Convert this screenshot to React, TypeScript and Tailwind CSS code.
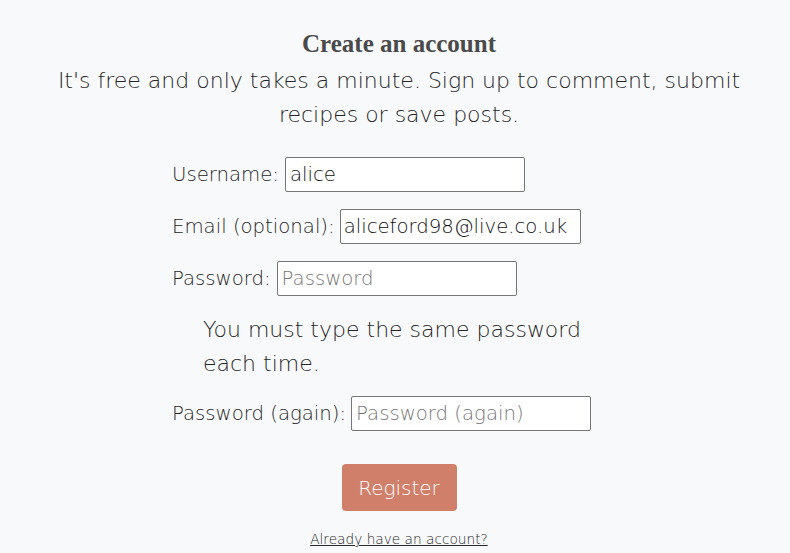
export default function App() {
  return (
    <div className="min-h-[553px] bg-[#f8f9fa] pl-[8px] text-[#262626] font-['DejaVu_Sans',sans-serif] font-extralight">
      <div className="pt-[30px] text-center">
        <h1 className="font-['Liberation_Serif',serif] font-bold text-[25px] leading-[28px] text-[#4a4a4a]">
          Create an account
        </h1>
        <p className="mx-auto mt-[6px] w-[700px] text-[22px] leading-[34px]">
          It's free and only takes a minute. Sign up to comment, submit recipes or save posts.
        </p>
      </div>

      <form className="mx-auto mt-[25px] w-[454px] text-[19.7px]">
        <div className="flex h-[35px] items-center gap-[6px]">
          <label>Username:</label>
          <input
            className="h-[35px] w-[240px] rounded-[2px] border border-[#767676] bg-white px-[4px] text-[#111] outline-none"
            defaultValue="alice"
          />
        </div>
        <div className="mt-[17px] flex h-[35px] items-center gap-[5px]">
          <label>Email (optional):</label>
          <input
            className="h-[35px] w-[241px] rounded-[2px] border border-[#767676] bg-white pl-[3px] pr-[4px] text-[#111] outline-none"
            defaultValue="aliceford98@live.co.uk"
          />
        </div>
        <div className="mt-[17px] flex h-[35px] items-center gap-[6px]">
          <label>Password:</label>
          <input
            type="password"
            className="h-[35px] w-[240px] rounded-[2px] border border-[#767676] bg-white px-[4px] text-[#111] outline-none placeholder:text-[#777]"
            placeholder="Password"
          />
        </div>
        <ul className="mt-[17px] w-[440px] pl-[31px] text-[22px] leading-[34px]">
          <li>You must type the same password each time.</li>
        </ul>
        <div className="mt-[15px] flex h-[35px] items-center gap-[5px]">
          <label>Password (again):</label>
          <input
            type="password"
            className="h-[35px] w-[240px] rounded-[2px] border border-[#767676] bg-white px-[4px] text-[#111] outline-none placeholder:text-[#777]"
            placeholder="Password (again)"
          />
        </div>
        <div className="mt-[33px] flex justify-center">
          <button
            type="button"
            className="h-[47px] w-[115px] rounded-[4px] bg-[#d0806a] text-[20px] text-white"
          >
            Register
          </button>
        </div>
      </form>

      <div className="mt-[18px] text-center text-[13.7px]">
        <a href="#" className="text-[#262626] underline">
          Already have an account?
        </a>
      </div>
    </div>
  );
}
